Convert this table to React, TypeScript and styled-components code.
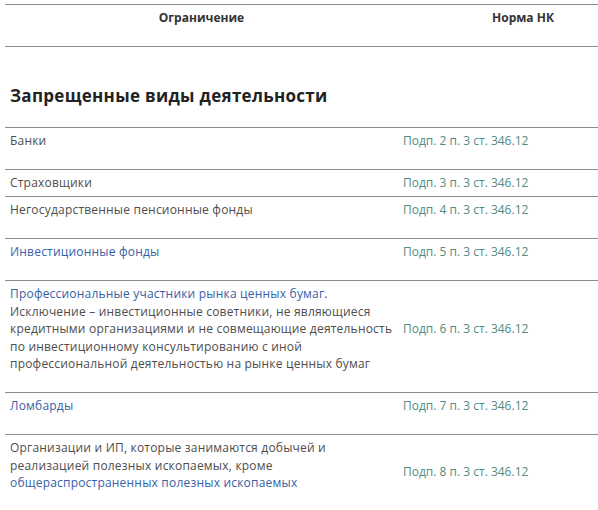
import React from "react";
import styled, { createGlobalStyle } from "styled-components";

const Global = createGlobalStyle`
  html, body { margin: 0; padding: 0; background: #fff; overflow: hidden; }
  body { font-family: "Open Sans", "DejaVu Sans", sans-serif; }
`;

const Table = styled.div`
  width: 593px;
  margin: 4px 0 0 5px;
`;

const Row = styled.div<{ $spaced?: boolean; $head?: boolean }>`
  display: grid;
  grid-template-columns: 393px 200px;
  align-items: center;
  border-top: 1px solid #8c8c8c;
  padding: 4px 0 ${(p) => (p.$spaced ? "19.5px" : "4.5px")};
  ${(p) => (p.$head ? "border-bottom: 1px solid #8c8c8c;" : "")}
`;

const HeadCell = styled.div<{ $shift?: number }>`
  padding: 0 5px 0 ${(p) => 5 + (p.$shift ?? 0)}px;
  text-align: center;
  font-size: 12px;
  line-height: 17.5px;
  font-weight: 700;
  color: #333;
`;

const Cell = styled.div<{ $tail?: number }>`
  padding: 0 5px ${(p) => p.$tail ?? 0}px;
  font-size: 12px;
  line-height: 17.5px;
  letter-spacing: 0.2px;
  color: #4d4d4d;
`;

const Norm = styled.div`
  padding: 0 5px;
  font-size: 12px;
  line-height: 17.5px;
  color: #528b83;
`;

const Link = styled.span`
  color: #3761a6;
`;

const Title = styled.h2`
  margin: 0;
  padding: 38px 5px 20px;
  font-size: 17px;
  line-height: 22px;
  font-weight: 700;
  letter-spacing: 0.3px;
  color: #222;
`;

type Item = { left: React.ReactNode; norm: string; spaced?: boolean; tail?: number };

const items: Item[] = [
  { left: "Банки", norm: "Подп. 2 п. 3 ст. 346.12", spaced: true },
  { left: "Страховщики", norm: "Подп. 3 п. 3 ст. 346.12" },
  { left: "Негосударственные пенсионные фонды", norm: "Подп. 4 п. 3 ст. 346.12", spaced: true },
  { left: <Link>Инвестиционные фонды</Link>, norm: "Подп. 5 п. 3 ст. 346.12", spaced: true },
  {
    left: (
      <>
        <Link>Профессиональные участники рынка ценных бумаг</Link>.<br />
        Исключение – инвестиционные советники, не являющиеся
        <br />
        кредитными организациями и не совмещающие деятельность
        <br />
        по инвестиционному консультированию с иной
        <br />
        профессиональной деятельностью на рынке ценных бумаг
      </>
    ),
    norm: "Подп. 6 п. 3 ст. 346.12",
    spaced: true,
  },
  { left: <Link>Ломбарды</Link>, norm: "Подп. 7 п. 3 ст. 346.12", spaced: true },
  {
    left: (
      <>
        Организации и ИП, которые занимаются добычей и
        <br />
        реализацией полезных ископаемых, кроме
        <br />
        <Link>общераспространенных полезных ископаемых</Link>
      </>
    ),
    norm: "Подп. 8 п. 3 ст. 346.12",
    spaced: true,
    tail: 13,
  },
];

export default function App() {
  return (
    <>
      <Global />
      <Table>
        <Row $head $spaced>
          <HeadCell>Ограничение</HeadCell>
          <HeadCell $shift={50}>Норма НК</HeadCell>
        </Row>
        <Title>Запрещенные виды деятельности</Title>
        {items.map((it, i) => (
          <Row key={i} $spaced={it.spaced}>
            <Cell $tail={it.tail}>{it.left}</Cell>
            <Norm>{it.norm}</Norm>
          </Row>
        ))}
      </Table>
    </>
  );
}
